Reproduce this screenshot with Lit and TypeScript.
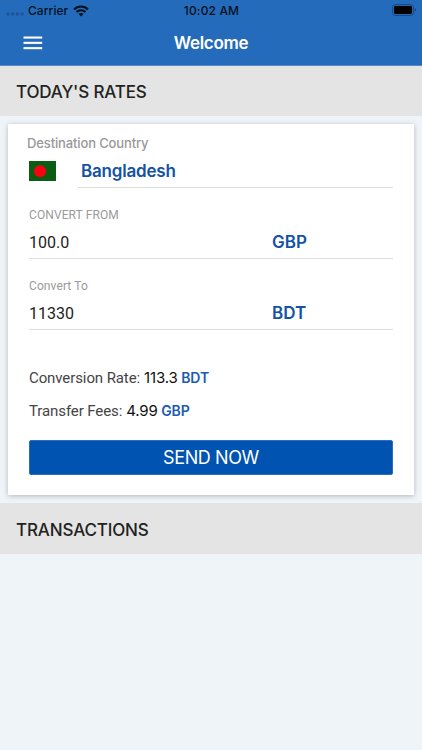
import { LitElement, html, css } from "lit";
import { customElement } from "lit/decorators.js";

@customElement("app-root")
export class AppRoot extends LitElement {
  static styles = css`
    :host {
      display: flex;
      flex-direction: column;
      height: 750px;
      overflow: hidden;
      background: #eff4f8;
      font-family: Inter, "Liberation Sans", sans-serif;
      color: #222;
      white-space: nowrap;
    }
    * { box-sizing: border-box; }
    svg { display: block; }
    .top { background: #246bbb; height: 66px; border-bottom: 1px solid #568bc8; flex: none; }
    .status {
      height: 20px;
      display: grid;
      grid-template-columns: 1fr auto 1fr;
      align-items: center;
      padding: 1px 5px 0 6px;
      font-size: 12px;
      font-weight: 500;
      line-height: 20px;
      color: #06101c;
    }
    .carrier { display: flex; align-items: center; }
    .dots { margin: 6px 4px 0 0; }
    .name { letter-spacing: 0.05px; }
    .wifi { margin-left: 5px; }
    .clock { letter-spacing: 0.15px; }
    .battery { justify-self: end; margin-top: -2px; }
    .nav {
      height: 45px;
      display: grid;
      grid-template-columns: 1fr auto 1fr;
      align-items: center;
      padding: 0 23px;
      color: #fff;
    }
    .title { font-size: 17px; font-weight: 600; line-height: 43px; letter-spacing: -0.3px; padding-top: 2px; }
    .band {
      flex: none;
      height: 50px;
      line-height: 52px;
      padding-left: 16px;
      background: #e4e4e4;
      font-size: 17px;
      font-weight: 500;
      letter-spacing: -0.15px;
    }
    .lower { height: 51px; line-height: 54px; }
    .card {
      flex: none;
      height: 371px;
      margin: 8px 8px 8px;
      padding: 0 21px;
      background: #fff;
      box-shadow: 0 1px 5px rgba(0, 0, 0, 0.25);
      display: flex;
      flex-direction: column;
    }
    .dest { margin: 11px 0 0 -2px; font-size: 13px; line-height: 16px; font-weight: 500; letter-spacing: -0.13px; color: #999; }
    .country { display: flex; height: 37px; }
    .flag { margin-top: 10px; width: 27px; height: 20px; }
    .pick {
      flex: 1;
      margin-left: 22px;
      padding-left: 3px;
      line-height: 40px;
      font-size: 17px;
      font-weight: 600;
      letter-spacing: -0.2px;
      color: #1352a5;
      border-bottom: 1px solid #dedede;
    }
    .label { font: 12px/16px Roboto, sans-serif; color: #9a9a9a; margin-top: 19px; letter-spacing: 0.1px; }
    .row {
      display: grid;
      grid-template-columns: 243px 1fr;
      height: 36px;
      line-height: 39px;
      border-bottom: 1px solid #dedede;
    }
    .amount { font-family: Roboto, sans-serif; font-size: 16px; }
    .code { font-size: 17px; font-weight: 600; color: #1352a5; }
    .info { display: flex; align-items: baseline; height: 33px; line-height: 34px; font-size: 15px; }
    .first { margin-top: 31px; }
    .key { font-family: Roboto, sans-serif; color: #444; letter-spacing: -0.1px; }
    .value { color: #111; margin-left: 4px; letter-spacing: -0.15px; }
    .unit { color: #1a5cb0; font-weight: 600; font-size: 14px; margin-left: 3.5px; }
    .send {
      margin-top: 13px;
      height: 35px;
      border: 1px solid #2c6dbd;
      border-radius: 2px;
      background: #0053b0;
      color: #fff;
      font: 18px/34px Inter, sans-serif;
      letter-spacing: -0.4px;
      padding: 0;
    }
  `;

  private field(label: string, amount: string, code: string) {
    return html`<div class="label">${label}</div>
      <div class="row"><span class="amount">${amount}</span><span class="code">${code}</span></div>`;
  }

  private info(key: string, value: string, unit: string, cls = "") {
    return html`<div class="info ${cls}">
      <span class="key">${key}</span><span class="value">${value}</span><span class="unit">${unit}</span>
    </div>`;
  }

  render() {
    return html`
      <header class="top">
        <div class="status">
          <div class="carrier">
            <svg class="dots" width="18" height="4" fill="#1c5597">
              <circle cx="2" cy="2" r="1.7" /><circle cx="6.7" cy="2" r="1.7" />
              <circle cx="11.4" cy="2" r="1.7" /><circle cx="16.1" cy="2" r="1.7" />
            </svg>
            <span class="name">Carrier</span>
            <svg class="wifi" width="16" height="12" viewBox="0 0 16 12" fill="none" stroke="#06101c" stroke-width="2.1">
              <path d="M1 4.4C5 .5 11 .5 15 4.4" />
              <path d="M3.5 7C6 4.6 10 4.6 12.5 7" />
              <path d="M8 11.6 5.5 9.1C7 7.7 9 7.7 10.5 9.1Z" fill="#06101c" stroke="none" />
            </svg>
          </div>
          <span class="clock">10:02 AM</span>
          <svg class="battery" width="25" height="12" viewBox="0 0 25 12">
            <rect x=".6" y=".6" width="20.8" height="10.8" rx="2.8" fill="none" stroke="#174980" />
            <rect x="2" y="2" width="18" height="8" rx="1.4" fill="#000" />
            <path d="M22.8 4v4c1.6-.6 1.6-3.4 0-4Z" fill="#174980" />
          </svg>
        </div>
        <div class="nav">
          <svg width="20" height="14" fill="#fff">
            <rect x="0.5" y="0.5" width="18.7" height="2.1" /><rect x="0.5" y="5.8" width="18.7" height="2.1" />
            <rect x="0.5" y="11.1" width="18.7" height="2.1" />
          </svg>
          <span class="title">Welcome</span>
        </div>
      </header>
      <div class="band">TODAY'S RATES</div>
      <section class="card">
        <div class="dest">Destination Country</div>
        <div class="country">
          <svg class="flag" viewBox="0 0 27 20">
            <rect width="27" height="20" fill="#0b5d14" />
            <circle cx="11" cy="10.3" r="6" fill="#fb0012" />
          </svg>
          <div class="pick">Bangladesh</div>
        </div>
        ${this.field("CONVERT FROM", "100.0", "GBP")}
        ${this.field("Convert To", "11330", "BDT")}
        ${this.info("Conversion Rate:", "113.3", "BDT", "first")}
        ${this.info("Transfer Fees:", "4.99", "GBP")}
        <button class="send">SEND NOW</button>
      </section>
      <div class="band lower">TRANSACTIONS</div>
    `;
  }
}
